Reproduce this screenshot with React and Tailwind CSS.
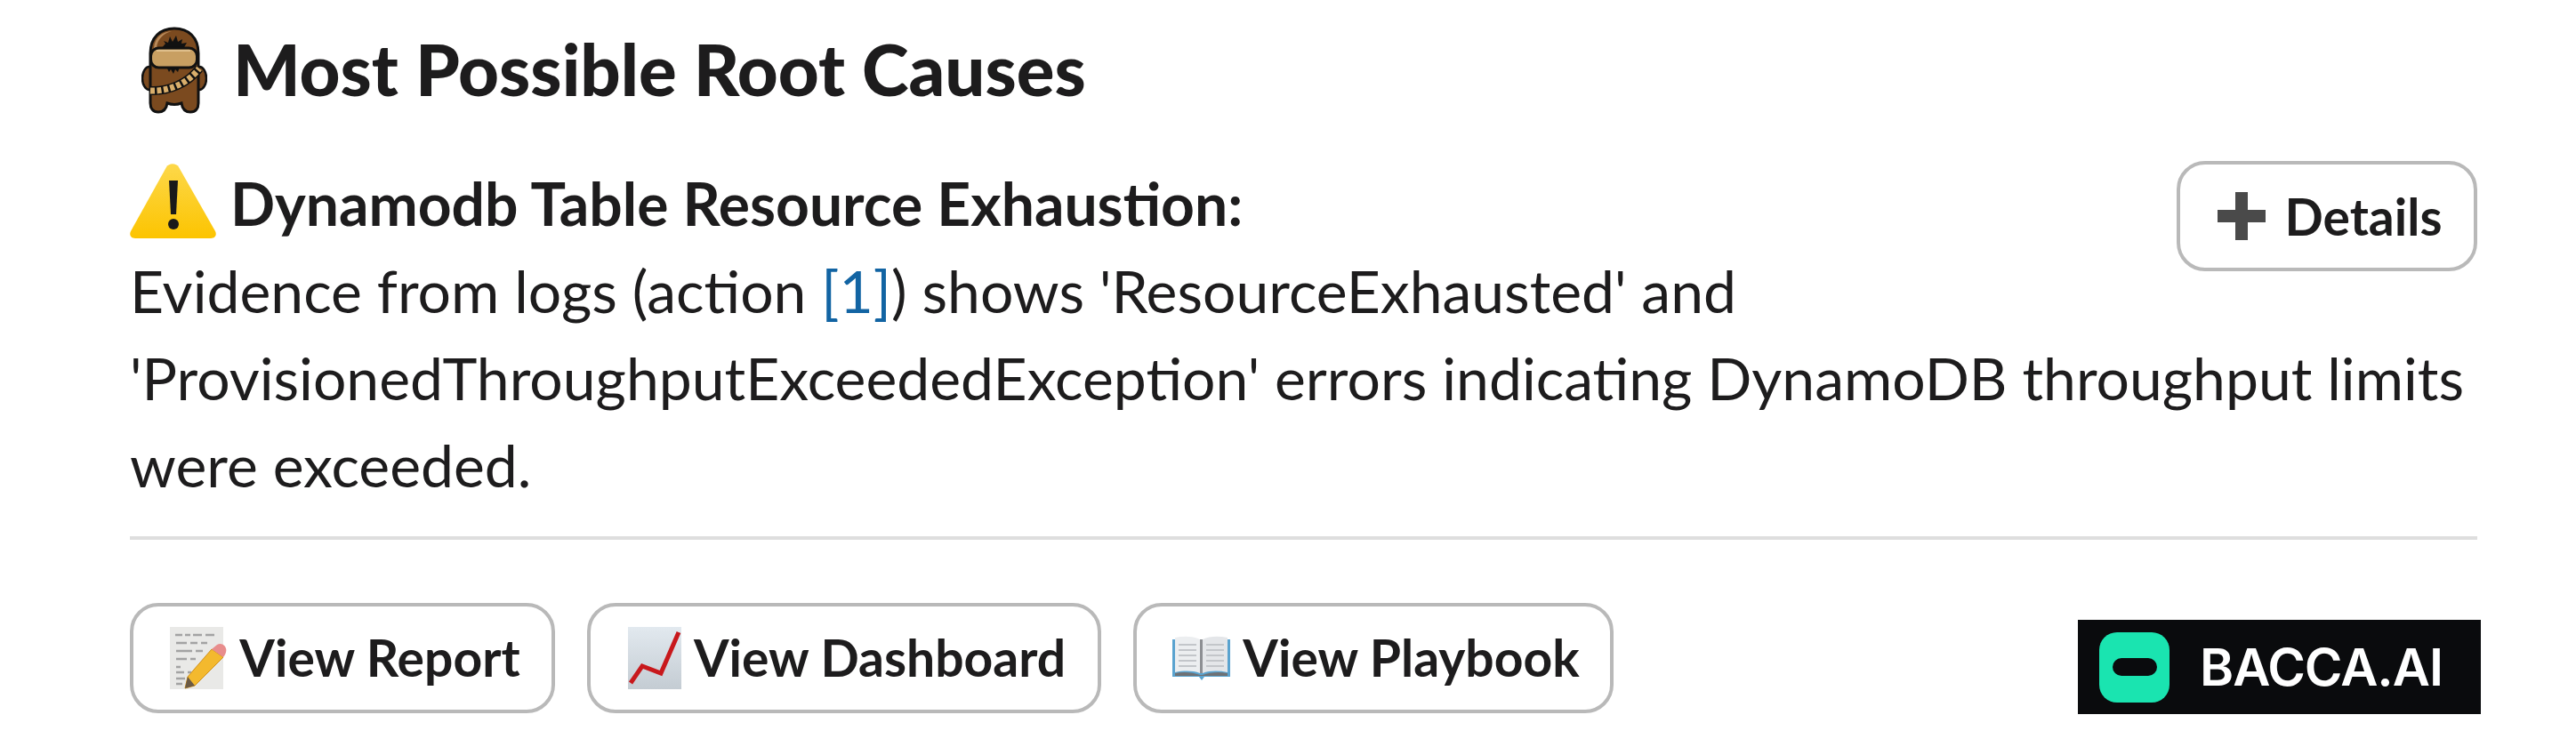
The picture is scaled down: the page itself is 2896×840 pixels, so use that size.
const WookieeIcon = () => (
  <svg viewBox="0 0 74 98" className="w-[74px] h-[98px] shrink-0">
    <ellipse cx="9" cy="58" rx="8" ry="13" fill="#7b4a1f" stroke="#111" strokeWidth="2.5" />
    <ellipse cx="65" cy="58" rx="8" ry="13" fill="#7b4a1f" stroke="#111" strokeWidth="2.5" />
    <path
      d="M10 30C10 12 21 2 37 2s27 10 27 28v56c0 6-3 10-9 10s-9-3-10-10c-5 2-11 2-16 0-1 7-4 10-10 10s-9-4-9-10z"
      fill="#7b4a1f"
      stroke="#111"
      strokeWidth="3"
    />
    <path d="M14 24C15 11 24 6 34 5 24 8 18 14 17 24z" fill="#b98a5a" />
    <path
      d="M22 25l5-6-2-3 5 2 2-7 3 6 4-7 2 7 5-3-1 5 6-1-4 7zM28 45l3 6 2-3 3 5 2-5 3 3 2-6z"
      fill="#111"
    />
    <rect x="10.5" y="24" width="52" height="22" rx="9" fill="#c89f62" stroke="#111" strokeWidth="3" />
    <path d="M17 27h38" stroke="#e6c99a" strokeWidth="1.5" />
    <path d="M10 72C30 73 52 64 65 47" fill="none" stroke="#111" strokeWidth="10" />
    <path
      d="M10 72C30 73 52 64 65 47"
      fill="none"
      stroke="#d9ae6b"
      strokeWidth="7"
      strokeDasharray="5 2.5"
    />
  </svg>
);

const WarningIcon = () => (
  <svg viewBox="0 0 97 84" className="w-[97px] h-[84px] shrink-0">
    <defs>
      <linearGradient id="warn" x1="0" y1="0" x2="0" y2="1">
        <stop offset="0" stopColor="#fdd84a" />
        <stop offset="1" stopColor="#fcc400" />
      </linearGradient>
    </defs>
    <path
      d="M41 4c3-5 11-5 14 0l41 72c2 4 0 8-5 8H6c-5 0-7-4-5-8z"
      fill="url(#warn)"
    />
    <path d="M44 19h10l-2 38h-6z" fill="#1a1a1a" />
    <circle cx="49" cy="68" r="6" fill="#1a1a1a" />
  </svg>
);

const MemoIcon = () => (
  <svg viewBox="0 0 64 70" className="w-[64px] h-[70px] shrink-0">
    <rect x="0" y="0" width="60" height="70" fill="#e9e9e7" />
    <path
      d="M6 9h8M17 9h6M26 9h10M40 9h10M7 18h12M23 18h8M35 18h7M7 27h18M29 27h8M7 36h12M23 36h6M7 45h5M7 51h9M20 51h4M7 58h10M7 64h7"
      stroke="#a3a3a3"
      strokeWidth="2.5"
    />
    <path d="M47 25l13 9-32 32-11 3 3-13z" fill="#f3b92e" stroke="#d1901a" strokeWidth="1" />
    <path d="M47 25l6-5c3-2 7-1 9 2s2 7-2 12z" fill="#e88d8d" />
    <path d="M20 56l-3 13 11-3z" fill="#6b5a45" />
  </svg>
);

const ChartIcon = () => (
  <svg viewBox="0 0 60 70" className="w-[60px] h-[70px] shrink-0">
    <defs>
      <linearGradient id="paper" x1="0" y1="0" x2="0" y2="1">
        <stop offset="0" stopColor="#e2e9ef" />
        <stop offset="1" stopColor="#c4ccd3" />
      </linearGradient>
    </defs>
    <rect width="60" height="70" fill="url(#paper)" />
    <path d="M3 63l13-19 21 8L57 6" fill="none" stroke="#c8181c" strokeWidth="5" />
  </svg>
);

const BookIcon = () => (
  <svg viewBox="0 0 65 50" className="w-[65px] h-[50px] shrink-0">
    <path d="M0 4h65v42H36l-3 4-3-4H0z" fill="#5aa3cf" />
    <path d="M3 2c10-2 20-2 28 2v38c-8-3-18-3-28-1z" fill="#eceef0" />
    <path d="M62 2c-10-2-20-2-28 2v38c8-3 18-3 28-1z" fill="#e4e6e9" />
    <path d="M31 4h3v38h-3z" fill="#8d8f93" />
    <path d="M3 42c10-2 20-1 28 2h3c8-3 18-4 28-2v3H3z" fill="#6f7174" />
    <path
      d="M7 10h20M7 16h20M7 22h20M7 28h20M7 34h20M38 10h20M38 16h20M38 22h20M38 28h20M38 34h20"
      stroke="#c3c6ca"
      strokeWidth="2"
    />
  </svg>
);

const LinkButton = ({ icon, label, className }) => (
  <button
    className={`flex items-center justify-center gap-[14px] h-[124px] pl-[6px] rounded-[32px] border-4 border-[#b9b9b9] bg-white text-[57px] font-bold ${className}`}
  >
    {icon}
    <span>{label}</span>
  </button>
);

const App = () => {
  return (
    <div className="w-[2896px] h-[840px] bg-white overflow-hidden font-[Lato,sans-serif] text-[#1d1c1d] pl-[146px] pr-[111px] pt-[30px]">
      <div className="flex items-center h-[98px]">
        <div className="pl-[13px]">
          <WookieeIcon />
        </div>
        <h1 className="ml-[29px] -mt-[5px] text-[79.7px] leading-[98px] font-black">
          Most Possible Root Causes
        </h1>
      </div>

      <div className="mt-[53px] text-[66px] leading-[98px]">
        <button className="float-right flex items-center justify-center gap-[22px] w-[338px] h-[124px] pl-[6px] rounded-[32px] border-4 border-[#b9b9b9] bg-white text-[57px] font-bold">
          <svg viewBox="0 0 54 54" className="w-[54px] h-[54px]">
            <path d="M20 0h14v20h20v14H34v20H20V34H0V20h20z" fill="#4a4a4a" />
          </svg>
          <span>Details</span>
        </button>
        <div className="flex items-end h-[97px]">
          <span className="mb-[10px] mr-[16px]">
            <WarningIcon />
          </span>
          <strong className="font-bold">Dynamodb Table Resource Exhaustion:</strong>
        </div>
        <p>
          Evidence from logs (action <span className="text-[#1264a3]">[1]</span>) shows
          'ResourceExhausted' and 'ProvisionedThroughputExceededException' errors indicating
          DynamoDB throughput limits were exceeded.
        </p>
      </div>

      <div className="mt-[31px] border-t-4 border-[#dedede]" />

      <div className="mt-[71px] flex items-start">
        <div className="flex gap-[36px]">
          <LinkButton icon={<MemoIcon />} label="View Report" className="w-[478px]" />
          <LinkButton icon={<ChartIcon />} label="View Dashboard" className="w-[578px]" />
          <LinkButton icon={<BookIcon />} label="View Playbook" className="w-[540px]" />
        </div>
        <div className="ml-auto -mr-[4px] mt-[19px] flex items-center w-[453px] h-[106px] bg-[#0a0b0d] pl-[24px]">
          <div className="flex items-center justify-center w-[79px] h-[79px] rounded-[20px] bg-[#1ae4b0]">
            <div className="w-[50px] h-[20px] rounded-full bg-[#0a0b0d]" />
          </div>
          <span className="ml-[34px] text-[58px] font-semibold font-[Inter,sans-serif] text-white tracking-[-1px]">
            BACCA.AI
          </span>
        </div>
      </div>
    </div>
  );
};

export default App;
